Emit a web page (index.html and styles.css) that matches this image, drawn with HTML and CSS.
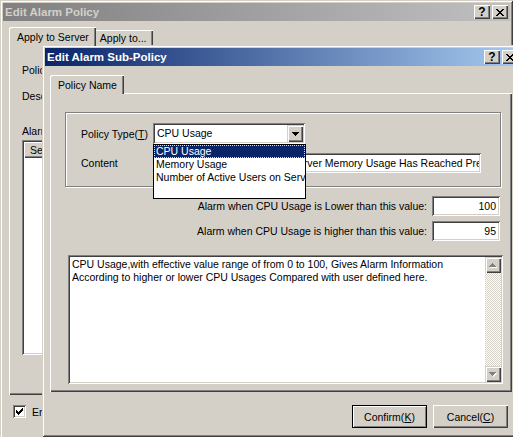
FILE: index.html
```html
<!DOCTYPE html>
<html>
<head>
<meta charset="utf-8">
<title>Edit Alarm Policy</title>
<link rel="stylesheet" href="styles.css">
</head>
<body>
<div class="win win-main">
  <div class="titlebar inactive">
    <span class="title">Edit Alarm Policy</span>
    <div class="capbtns">
      <span class="capbtn help">?</span>
      <span class="capbtn"><svg class="glyph" width="8" height="7" viewBox="0 0 8 7"><path d="M0 0h2v1h-2z M6 0h2v1h-2z M1 1h2v1h-2z M5 1h2v1h-2z M2 2h4v1h-4z M3 3h2v1h-2z M2 4h4v1h-4z M1 5h2v1h-2z M5 5h2v1h-2z M0 6h2v1h-2z M6 6h2v1h-2z" fill="#000"/></svg></span>
    </div>
  </div>
  <div class="main-body">
    <div class="tabs">
      <div class="tab sel">Apply to Server</div>
      <div class="tab">Apply to...</div>
    </div>
    <div class="panel main-panel">
      <div class="o-lbl">Policy Name:</div>
      <div class="o-lbl">Description:</div>
      <div class="o-lbl third">Alarm Sub-Policies:</div>
      <div class="listview sunken">
        <div class="lv-head"><span class="lv-col">Server</span><span class="lv-col">Policy Type</span></div>
      </div>
    </div>
    <div class="chk-row">
      <span class="chk sunken"><svg class="glyph" width="7" height="7" viewBox="0 0 7 7"><path d="M6 0h1v1h-1z M5 1h2v1h-2z M0 2h1v1h-1z M4 2h3v1h-3z M0 3h2v1h-2z M3 3h3v1h-3z M0 4h5v1h-5z M1 5h3v1h-3z M2 6h1v1h-1z" fill="#000"/></svg></span>
      <span>Enable</span>
    </div>
  </div>
</div>

<div class="win win-sub">
  <div class="titlebar active">
    <span class="title">Edit Alarm Sub-Policy</span>
    <div class="capbtns">
      <span class="capbtn help">?</span>
      <span class="capbtn"><svg class="glyph" width="8" height="7" viewBox="0 0 8 7"><path d="M0 0h2v1h-2z M6 0h2v1h-2z M1 1h2v1h-2z M5 1h2v1h-2z M2 2h4v1h-4z M3 3h2v1h-2z M2 4h4v1h-4z M1 5h2v1h-2z M5 5h2v1h-2z M0 6h2v1h-2z M6 6h2v1h-2z" fill="#000"/></svg></span>
    </div>
  </div>
  <div class="sub-body">
    <div class="tabs">
      <div class="tab sel sub-tab">Policy Name</div>
    </div>
    <div class="panel sub-panel">
      <div class="groupbox">
        <div class="g-row">
          <span class="g-lbl">Policy Type(<u>T</u>)</span>
          <div class="combo sunken">
            <span class="combo-text">CPU Usage</span>
            <span class="combo-btn"><svg class="glyph" width="7" height="4" viewBox="0 0 7 4"><path d="M0 0h7v1h-7z M1 1h5v1h-5z M2 2h3v1h-3z M3 3h1v1h-1z" fill="#000"/></svg></span>
          </div>
        </div>
        <div class="g-row second">
          <span class="g-lbl">Content</span>
          <div class="edit content-edit sunken"><div class="edit-inner">CPU Alarm Information: The Server Memory Usage Has Reached Preset Value</div></div>
        </div>
      </div>
      <div class="thresholds">
        <div class="t-row">
          <span>Alarm when CPU Usage is Lower than this value:</span>
          <div class="edit num sunken"><div class="edit-inner">100</div></div>
        </div>
        <div class="t-row">
          <span>Alarm when CPU Usage is higher than this value:</span>
          <div class="edit num sunken"><div class="edit-inner">95</div></div>
        </div>
      </div>
      <div class="memo sunken">
        <div class="memo-text">CPU Usage,with effective value range of from 0 to 100, Gives Alarm Information<br>According to higher or lower CPU Usages Compared with user defined here.</div>
        <div class="vscroll">
          <span class="sbtn"><svg class="glyph" width="8" height="5" viewBox="0 0 8 5"><path d="M4 1h1v1h-1z M3 2h3v1h-3z M2 3h5v1h-5z M1 4h7v1h-7z" fill="#fff"/><path d="M3 0h1v1h-1z M2 1h3v1h-3z M1 2h5v1h-5z M0 3h7v1h-7z" fill="#808080"/></svg></span>
          <span class="strack"></span>
          <span class="sbtn"><svg class="glyph" width="8" height="5" viewBox="0 0 8 5"><path d="M1 1h7v1h-7z M2 2h5v1h-5z M3 3h3v1h-3z M4 4h1v1h-1z" fill="#fff"/><path d="M0 0h7v1h-7z M1 1h5v1h-5z M2 2h3v1h-3z M3 3h1v1h-1z" fill="#808080"/></svg></span>
        </div>
      </div>
    </div>
    <div class="actions">
      <div class="btn default">Confirm(<u>K</u>)</div>
      <div class="btn">Cancel(<u>C</u>)</div>
    </div>
  </div>
</div>

<div class="droplist">
  <div class="dl-item sel">CPU Usage</div>
  <div class="dl-item">Memory Usage</div>
  <div class="dl-item">Number of Active Users on Server</div>
</div>
</body>
</html>
```

FILE: styles.css
```css
* { box-sizing: border-box; }
html, body { margin: 0; padding: 0; }
body {
  position: relative;
  width: 513px;
  height: 437px;
  overflow: hidden;
  background: #d4d0c8;
  font-family: "Liberation Sans", Arial, sans-serif;
  font-size: 10.5px;
  color: #000;
}
u { text-decoration: underline; text-underline-offset: 1px; }
.glyph { display: block; }

.sunken {
  background: #fff;
  box-shadow: inset 1px 1px #808080, inset -1px -1px #fff, inset 2px 2px #404040, inset -2px -2px #d4d0c8;
}

/* windows */
.win {
  position: absolute;
  display: flex;
  flex-direction: column;
  padding: 3px;
  background: #d4d0c8;
  box-shadow: inset 1px 1px #d4d0c8, inset -1px -1px #404040, inset 2px 2px #fff, inset -2px -2px #808080;
}
.win-main {
  left: 0;
  top: 0;
  width: 513px;
  height: 437px;
  box-shadow: inset 1px 1px #d4d0c8, inset -1px 0 #404040, inset 2px 2px #fff, inset -2px 0 #808080;
}
.win-sub { left: 42px; top: 45px; width: 481px; height: 392px; }

.titlebar {
  flex: none;
  height: 18px;
  display: flex;
  align-items: center;
  padding: 0 2px;
  font-size: 11.5px;
  font-weight: bold;
  white-space: nowrap;
}
.titlebar.inactive { background: linear-gradient(to right, #808080, #c0c0c0); color: #d4d0c8; }
.titlebar.active { background: linear-gradient(to right, #0a246a, #a6caf0); color: #fff; }
.capbtns { margin-left: auto; display: flex; gap: 2px; }
.capbtn {
  width: 16px;
  height: 14px;
  display: flex;
  align-items: center;
  justify-content: center;
  background: #d4d0c8;
  color: #000;
  box-shadow: inset 1px 1px #fff, inset -1px -1px #404040, inset -2px -2px #808080;
}
.help { font-size: 12px; font-weight: bold; line-height: 14px; }

/* tabs */
.tabs { flex: none; display: flex; align-items: flex-end; }
.tab {
  height: 15px;
  padding: 1px 6px 0;
  line-height: 14px;
  margin-left: -2px;
  background: #d4d0c8;
  white-space: nowrap;
  border-top-left-radius: 2px;
  box-shadow: inset 1px 1px #fff, inset -1px 0 #404040, inset -2px 0 #808080;
}
.tab.sel {
  position: relative;
  z-index: 1;
  height: 19px;
  margin-bottom: -1px;
  margin-left: 0;
  padding: 2px 7px 0 8px;
  line-height: 17px;
}
.panel {
  background: #d4d0c8;
  box-shadow: inset 1px 1px #fff, inset -1px -1px #404040, inset -2px -2px #808080;
}

/* main window body */
.main-body { flex: 1; min-height: 0; padding: 6px 0 0 6px; }
.main-panel { width: 497px; height: 350px; padding: 19px 0 0 13px; }
.o-lbl { height: 13px; line-height: 13px; white-space: nowrap; }
.o-lbl + .o-lbl { margin-top: 13px; }
.o-lbl.third { margin-top: 22px; }
.listview { margin-top: 2px; width: 470px; height: 215px; padding: 2px; }
.lv-head { display: flex; height: 16px; }
.lv-col {
  width: 100px;
  padding-left: 6px;
  line-height: 16px;
  background: #d4d0c8;
  box-shadow: inset 1px 1px #fff, inset -1px -1px #404040, inset -2px -2px #808080;
}
.chk-row { display: flex; align-items: center; gap: 6px; margin: 10px 0 0 4px; height: 13px; }
.chk { width: 13px; height: 13px; padding: 3px; }

/* sub window body */
.sub-body { flex: 1; min-height: 0; padding: 9px 8px 0 5px; }
.sub-tab { margin-left: 1px; padding: 2px 6px 0 8px; }
.sub-panel { height: 299px; padding-top: 19px; }

.groupbox {
  margin-left: 15px;
  width: 436px;
  height: 75px;
  padding: 10px 0 0 15px;
  border: 1px solid #808080;
  box-shadow: inset 1px 1px #fff, 1px 1px #fff;
}
.g-row { display: flex; align-items: center; height: 21px; }
.g-row.second { margin-top: 9px; height: 20px; }
.g-lbl { width: 72px; white-space: nowrap; }
.combo { width: 152px; height: 21px; display: flex; align-items: center; padding: 2px; }
.combo-text { flex: 1; padding-left: 2px; line-height: 17px; white-space: nowrap; }
.combo-btn {
  width: 16px;
  height: 17px;
  display: flex;
  align-items: center;
  justify-content: center;
  background: #d4d0c8;
  box-shadow: inset 1px 1px #d4d0c8, inset 2px 2px #fff, inset -1px -1px #404040, inset -2px -2px #808080;
}
.edit { height: 20px; padding: 2px; }
.edit-inner { height: 16px; line-height: 16px; overflow: hidden; white-space: nowrap; padding: 0 2px; }
.content-edit { width: 328px; }

.thresholds { margin-left: 15px; width: 436px; padding-right: 1px; }
.t-row { display: flex; justify-content: flex-end; align-items: center; gap: 5px; height: 20px; margin-top: 5px; white-space: nowrap; }
.t-row:first-child { margin-top: 9px; }
.num { width: 68px; }
.num .edit-inner { text-align: right; }

.memo { margin: 14px 0 0 18px; width: 435px; height: 129px; display: flex; padding: 2px; }
.memo-text { flex: 1; padding: 1px 2px; line-height: 13px; white-space: nowrap; overflow: hidden; }
.vscroll { width: 16px; flex: none; display: flex; flex-direction: column; }
.sbtn {
  height: 16px;
  flex: none;
  display: flex;
  align-items: center;
  justify-content: center;
  background: #d4d0c8;
  box-shadow: inset 1px 1px #d4d0c8, inset 2px 2px #fff, inset -1px -1px #404040, inset -2px -2px #808080;
}
.strack { flex: 1; background: conic-gradient(#fff 25%, #d4d0c8 0 50%, #fff 0 75%, #d4d0c8 0) 0 0 / 2px 2px; }

.actions { display: flex; justify-content: flex-end; gap: 6px; margin-top: 13px; padding-right: 4px; }
.btn {
  width: 75px;
  height: 23px;
  display: flex;
  align-items: center;
  justify-content: center;
  background: #d4d0c8;
  box-shadow: inset 1px 1px #fff, inset -1px -1px #404040, inset -2px -2px #808080;
}
.btn.default { border: 1px solid #000; box-shadow: inset 1px 1px #fff, inset -1px -1px #808080; }

/* open combo list */
.droplist {
  position: absolute;
  left: 153px;
  top: 144px;
  width: 153px;
  height: 55px;
  background: #fff;
  border: 1px solid #000;
  z-index: 10;
  overflow: hidden;
}
.dl-item { height: 13px; line-height: 13px; padding-left: 2px; white-space: nowrap; }
.dl-item.sel { background: #0a246a; color: #fff; outline: 1px dotted #f5db95; outline-offset: -1px; }
```
